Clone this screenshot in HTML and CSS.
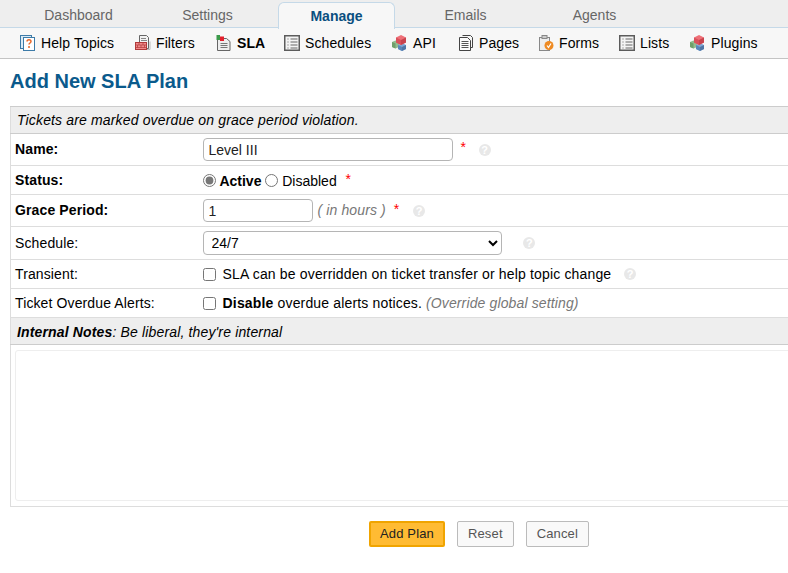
FILE: index.html
```html
<!DOCTYPE html>
<html>
<head>
  <title>Add New SLA Plan</title>
  <link rel="stylesheet" href="styles.css">
</head>
<body>
  <svg class="defs" width="0" height="0">
    <symbol id="i-list" viewBox="0 0 16 16">
      <rect x="0.750" y="0.750" width="14.500" height="14.500" fill="#f4f4f4" stroke="#5c5c5c" stroke-width="1.500"/>
      <path d="M3 4h2M3 7h2M3 10h2M3 13h2" stroke="#aaa" stroke-width="1.200"/>
      <path d="M6.500 4h7M6.500 7h7M6.500 10h7M6.500 13h7" stroke="#666"/>
    </symbol>
    <symbol id="i-cubes" viewBox="0 0 16 16">
      <path d="M0 7l3.500-1.500L7 7v5l-3.500 1.500L0 12z" fill="#93bb8e"/>
      <path d="M0 7l3.500 1.500V13.500L0 12z" fill="#6f9f6a"/>
      <path d="M6 10l4-2 4 2v4l-4 2-4-2z" fill="#7ea6d4"/>
      <path d="M6 10l4 2v4l-4-2z" fill="#5b86b8"/>
      <path d="M10 12l4-2v4l-4 2z" fill="#4f76a6"/>
      <path d="M4 2.500L9 0l5 2.500v5L9 10 4 7.500z" fill="#ee7078"/>
      <path d="M4 2.500L9 5v5L4 7.500z" fill="#d9505a"/>
      <path d="M9 5l5-2.500v5L9 10z" fill="#c8434d"/>
    </symbol>
  </svg>

  <div class="tabs">
    <a class="tab">Dashboard</a>
    <a class="tab">Settings</a>
    <a class="tab active">Manage</a>
    <a class="tab">Emails</a>
    <a class="tab">Agents</a>
  </div>

  <div class="subnav">
    <a class="sub w-help">
      <svg class="icon" viewBox="0 0 16 16">
        <rect x="0.500" y="0.500" width="11" height="13" fill="#dcebf5" stroke="#3d7ba8"/>
        <rect x="3.500" y="2.500" width="11" height="13" fill="#fff" stroke="#3d7ba8"/>
        <path d="M7 6.500c0-2.500 4-2.500 4 0 0 1.500-2 1.500-2 3M9 11v2" fill="none" stroke="#e8682a" stroke-width="1.500"/>
      </svg>
      Help Topics
    </a>
    <a class="sub w-filters">
      <svg class="icon" viewBox="0 0 16 16">
        <path d="M4.500 0.500h7l2 2v11h-9z" fill="#f2f2f2" stroke="#666"/>
        <path d="M6 3.500h5M6 5.500h6" stroke="#888"/>
        <path d="M12 14.500h3v-8" fill="none" stroke="#bbb"/>
        <rect x="0.500" y="7.500" width="11" height="7" fill="#f08a8a" stroke="#b03a3a"/>
        <path d="M1 10h10M1 12.500h10M4 8v2M8 8v2M2.500 10v2.500M6 10v2.500M9.500 10v2.500" stroke="#b03a3a" stroke-width="0.700"/>
      </svg>
      Filters
    </a>
    <a class="sub w-sla current">
      <svg class="icon" viewBox="0 0 16 16">
        <path d="M1.500 3.500h9l3.500 3v9H1.500z" fill="#eee" stroke="#666"/>
        <path d="M4.500 8.500h7M4.500 10.500h7M4.500 12.500h7" stroke="#777"/>
        <rect x="0.500" y="0" width="3.500" height="5" fill="#3b9a4a"/>
        <rect x="4" y="1.500" width="4" height="4.500" fill="#e2202c"/>
      </svg>
      SLA
    </a>
    <a class="sub w-schedules">
      <svg class="icon"><use href="#i-list"/></svg>
      Schedules
    </a>
    <a class="sub w-api">
      <svg class="icon"><use href="#i-cubes"/></svg>
      API
    </a>
    <a class="sub w-pages">
      <svg class="icon" viewBox="0 0 16 16">
        <path d="M4.500 0.500h8l2 2v10h-2" fill="#f6f6f6" stroke="#444"/>
        <path d="M1.500 2.500h8l3 3v10h-11z" fill="#fbfbfb" stroke="#444"/>
        <path d="M3.500 6.500h7M3.500 8.500h7M3.500 10.500h7M3.500 12.500h7" stroke="#555"/>
      </svg>
      Pages
    </a>
    <a class="sub w-forms">
      <svg class="icon" viewBox="0 0 16 16">
        <rect x="1.500" y="2.500" width="10" height="13" fill="#eee" stroke="#888"/>
        <rect x="4" y="0.500" width="5" height="3" fill="#ccc" stroke="#888"/>
        <circle cx="11" cy="10.500" r="4.500" fill="#ee8a22"/>
        <path d="M9 10.500l1.500 2 2.500-4" fill="none" stroke="#fff" stroke-width="1.200"/>
      </svg>
      Forms
    </a>
    <a class="sub w-lists">
      <svg class="icon"><use href="#i-list"/></svg>
      Lists
    </a>
    <a class="sub w-plugins">
      <svg class="icon"><use href="#i-cubes"/></svg>
      Plugins
    </a>
  </div>

  <div class="content">
    <h2>Add New SLA Plan</h2>

    <form class="plan-form">
      <table class="form-table">
        <colgroup>
          <col class="col-label">
          <col>
        </colgroup>
        <tr class="head h-top"><th colspan="2"><em>Tickets are marked overdue on grace period violation.</em></th></tr>
        <tr class="r-name">
          <td class="lbl"><b>Name:</b></td>
          <td>
            <input class="txt txt-name" type="text" value="Level III">
            <span class="req req-name">*</span>
            <span class="help help-name">?</span>
          </td>
        </tr>
        <tr class="r-status">
          <td class="lbl"><b>Status:</b></td>
          <td>
            <label class="opt"><input class="radio" type="radio" name="status" checked> <b>Active</b></label>
            <label class="opt"><input class="radio" type="radio" name="status"> Disabled</label>
            <span class="req req-status">*</span>
          </td>
        </tr>
        <tr class="r-grace">
          <td class="lbl"><b>Grace Period:</b></td>
          <td>
            <input class="txt txt-grace" type="text" value="1">
            <em class="hint hint-grace">( in hours )</em>
            <span class="req req-grace">*</span>
            <span class="help help-grace">?</span>
          </td>
        </tr>
        <tr class="r-schedule">
          <td class="lbl">Schedule:</td>
          <td>
            <select class="sel"><option>24/7</option></select>
            <span class="help help-sched">?</span>
          </td>
        </tr>
        <tr class="r-check">
          <td class="lbl">Transient:</td>
          <td>
            <label class="opt"><input class="check" type="checkbox"> SLA can be overridden on ticket transfer or help topic change</label>
            <span class="help help-trans">?</span>
          </td>
        </tr>
        <tr class="r-check">
          <td class="lbl">Ticket Overdue Alerts:</td>
          <td>
            <label class="opt"><input class="check" type="checkbox"> <b>Disable</b> overdue alerts notices.</label>
            <em class="hint">(Override global setting)</em>
          </td>
        </tr>
        <tr class="head h-notes"><th colspan="2"><em><b>Internal Notes</b>: Be liberal, they're internal</em></th></tr>
        <tr class="r-notes">
          <td colspan="2"><div class="notes"></div></td>
        </tr>
      </table>

      <div class="buttons">
        <button type="submit" class="btn primary">Add Plan</button>
        <button type="reset" class="btn">Reset</button>
        <button type="button" class="btn">Cancel</button>
      </div>
    </form>
  </div>
</body>
</html>
```

FILE: styles.css
```css
html, body {
  overflow: hidden;
}

body {
  font-family: 'Liberation Sans', Arial, sans-serif;
  font-size: 14px;
  color: #000;
  background-color: #fff;
  margin: 0;
  padding: 0;
}

.defs {
  display: block;
  height: 0;
}

.tabs {
  display: flex;
  height: 27px;
  padding-left: 20px;
  background-color: #eeeeee;
  border-bottom: 1px solid #c5d9e8;
}

.tab {
  width: 117px;
  height: 26px;
  margin: 2px 12px 0 0;
  line-height: 26px;
  text-align: center;
  color: #666;
  box-sizing: border-box;
}

.tab.active {
  height: 27px;
  background-color: #f7f7f7;
  border: 1px solid #c5d9e8;
  border-bottom: none;
  border-radius: 6px 6px 0 0;
  font-weight: bold;
  color: #0a4f80;
}

.subnav {
  display: flex;
  height: 30px;
  padding-left: 20px;
  background-color: #f7f7f7;
  border-bottom: 1px solid #c4c4c4;
  align-items: center;
}

.sub {
  display: flex;
  align-items: center;
  gap: 5px;
  color: #000;
  letter-spacing: 0.1px;
}

.icon {
  width: 16px;
  height: 16px;
  flex: none;
}

.w-help { width: 115px; }
.w-filters { width: 81px; }
.w-sla { width: 68px; }
.w-schedules { width: 108px; }
.w-api { width: 66px; }
.w-pages { width: 80px; }
.w-forms { width: 81px; }
.w-lists { width: 71px; }
.w-plugins { width: 80px; }

.current {
  font-weight: bold;
}

.content {
  padding: 0 10px;
  width: 938px;
}

h2 {
  margin: 10px 0 13px;
  font-size: 20px;
  line-height: 24px;
  color: #0a5a8c;
}

.form-table {
  width: 100%;
  table-layout: fixed;
  border-collapse: collapse;
  border-left: 1px solid #ddd;
}

.col-label {
  width: 188px;
}

.form-table td {
  padding: 0 0 0 4px;
  border-bottom: 1px solid #ddd;
  white-space: nowrap;
}

.form-table td.lbl {
  letter-spacing: 0.12px;
}

.head th {
  height: 26px;
  padding: 0 0 0 6px;
  background-color: #eeeeee;
  border-top: 1px solid #ccc;
  border-bottom: 1px solid #ccc;
  font-weight: normal;
  text-align: left;
  letter-spacing: 0.15px;
}

.h-notes th {
  height: 25px;
  padding-top: 1px;
}

.r-name td { height: 31px; }
.r-status td { height: 28px; }
.r-grace td { height: 31px; }
.r-schedule td { height: 32px; }

.r-name td.lbl,
.r-grace td.lbl {
  height: 29px;
  padding-bottom: 2px;
}

.r-check td {
  height: 26px;
  padding-bottom: 2px;
}

.form-table .r-check td.lbl {
  padding-bottom: 0;
}

.r-notes td {
  height: 152px;
  padding: 4px 0 5px 4px;
}

.notes {
  height: 149px;
  border: 1px solid #eee;
  border-radius: 3px;
}

.txt {
  font-family: inherit;
  font-size: 14px;
  height: 21px;
  padding: 0 5px;
  border: 1px solid #b5b5b5;
  border-radius: 4px;
  color: #222;
  background-color: #fff;
  vertical-align: middle;
}

.txt-name { width: 238px; }
.txt-grace { width: 98px; }

.sel {
  font-family: inherit;
  font-size: 14px;
  width: 299px;
  height: 24px;
  padding-left: 4px;
  border: 1px solid #b5b5b5;
  border-radius: 4px;
  color: #000;
  background-color: #fff;
  vertical-align: middle;
}

.opt {
  vertical-align: middle;
}

.r-check .opt {
  letter-spacing: 0.16px;
}

.radio {
  margin: 0;
  width: 13px;
  height: 13px;
  vertical-align: -1px;
  accent-color: #777;
}

.check {
  margin: 0 3px 0 0;
  width: 13px;
  height: 13px;
  vertical-align: -2px;
}

.hint {
  color: #777;
  letter-spacing: 0.13px;
  position: relative;
  top: 2px;
}

.hint-grace {
  top: 1px;
  margin-left: 1px;
}

.req {
  color: #f00;
}

.req-name {
  margin-left: 4px;
  position: relative;
  top: -1px;
}

.req-status { margin-left: 5px; }
.req-grace { margin-left: 4px; }

.help {
  display: inline-block;
  width: 12px;
  height: 12px;
  line-height: 12px;
  border-radius: 50%;
  background-color: #e8e8e8;
  color: #fff;
  font-size: 11px;
  font-weight: bold;
  text-align: center;
  vertical-align: middle;
}

.help-name { margin-left: 9px; }
.help-grace { margin-left: 10px; }
.help-sched { margin-left: 18px; }
.help-trans { margin-left: 9px; }

.buttons {
  display: flex;
  justify-content: center;
  gap: 12px;
  margin-top: 14px;
}

.btn {
  font-family: inherit;
  font-size: 13px;
  letter-spacing: 0.15px;
  height: 26px;
  padding: 0 10px 2px;
  border: 1px solid #bbbbbb;
  border-radius: 2px;
  background-color: #f9f9f9;
  color: #555;
  cursor: pointer;
}

.btn.primary {
  padding: 0 9px 2px;
  background-color: #ffbb33;
  border: 2px solid #f0a400;
  color: #222;
}
```
